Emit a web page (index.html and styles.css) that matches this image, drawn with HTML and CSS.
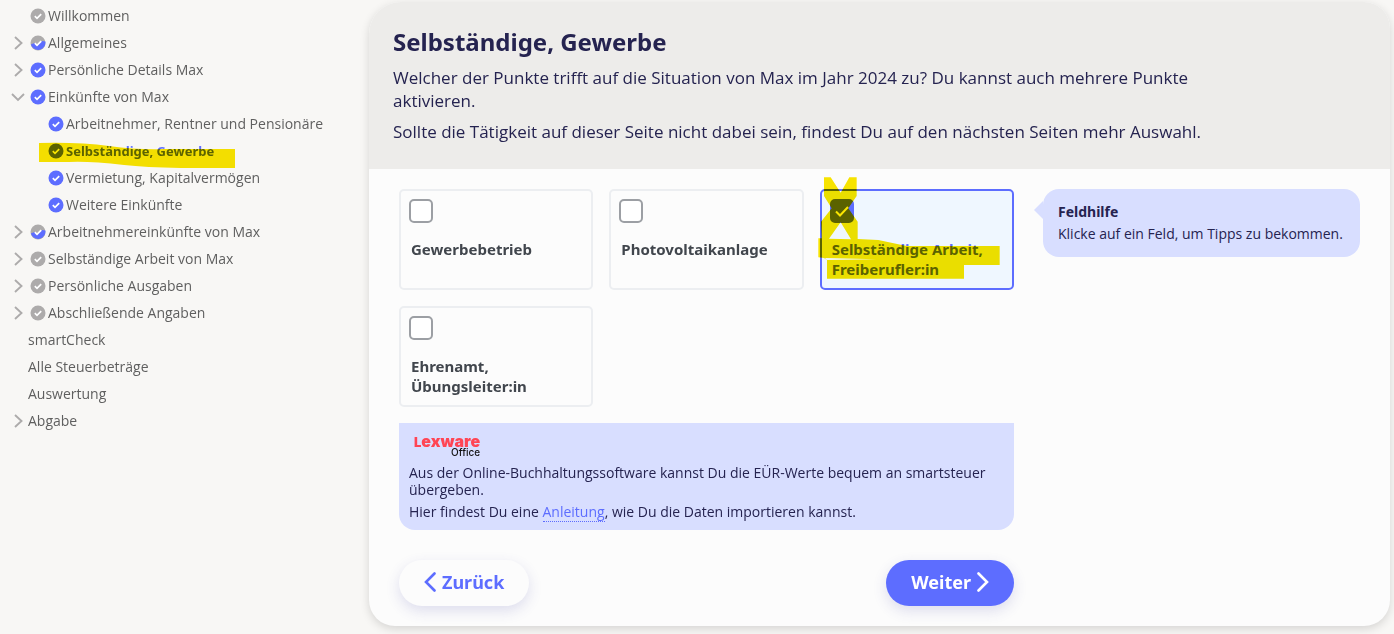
FILE: index.html
```html
<!DOCTYPE html>
<html lang="de">
<head>
<meta charset="utf-8">
<title>Selbständige, Gewerbe</title>
<link rel="stylesheet" href="styles.css">
</head>
<body>
<svg class="defs" width="0" height="0" aria-hidden="true">
  <defs>
    <symbol id="check" viewBox="0 0 16 16">
      <circle cx="8" cy="8" r="7.5" fill="currentColor"/>
      <path d="M4.8 8.2l2.2 2.1 4.2-4.2" fill="none" stroke="#fff" stroke-width="1.7"/>
    </symbol>
    <symbol id="half" viewBox="0 0 16 16">
      <circle cx="8" cy="8" r="7.5" fill="#adabab"/>
      <path d="M.8 9.6L4.4 8 7 10.4 12 6l3.4.4A7.5 7.5 0 0 1 .8 9.600z" fill="#5d6dff"/>
      <path d="M4.8 8.2l2.2 2.1 4.2-4.2" fill="none" stroke="#fff" stroke-width="1.7"/>
    </symbol>
    <symbol id="right" viewBox="0 0 12 14">
      <path d="M3 1l6.500 6L3 13" fill="none" stroke="currentColor" stroke-width="1.9"/>
    </symbol>
    <symbol id="down" viewBox="0 0 14 12">
      <path d="M1 3l6 6 6-6" fill="none" stroke="currentColor" stroke-width="1.9"/>
    </symbol>
  </defs>
</svg>
<div class="page">
  <nav class="sidebar" aria-label="Navigation">
    <ul class="menu">
      <li><a class="item" href="#"><span class="toggle"></span><svg class="state"><use href="#check"/></svg>Willkommen</a></li>
      <li><a class="item" href="#"><span class="toggle"><svg class="arrow"><use href="#right"/></svg></span><svg class="state"><use href="#half"/></svg>Allgemeines</a></li>
      <li><a class="item" href="#"><span class="toggle"><svg class="arrow"><use href="#right"/></svg></span><svg class="state done"><use href="#check"/></svg>Persönliche Details Max</a></li>
      <li><a class="item" href="#"><span class="toggle"><svg class="arrow arrow-down"><use href="#down"/></svg></span><svg class="state done"><use href="#check"/></svg>Einkünfte von Max</a>
        <ul class="menu submenu">
          <li><a class="item" href="#"><span class="toggle"></span><svg class="state done"><use href="#check"/></svg>Arbeitnehmer, Rentner und Pensionäre</a></li>
          <li class="marked"><a class="item current" href="#" aria-current="page"><span class="toggle"></span><svg class="state done"><use href="#check"/></svg>Selbständige, Gewerbe</a>
            <svg class="marker marker-menu" viewBox="0 0 196 26" aria-hidden="true"><path d="M0 1Q40 0 70 4T125 7H196V26Q120 27 85 23T30 20H0z"/></svg></li>
          <li><a class="item" href="#"><span class="toggle"></span><svg class="state done"><use href="#check"/></svg>Vermietung, Kapitalvermögen</a></li>
          <li><a class="item" href="#"><span class="toggle"></span><svg class="state done"><use href="#check"/></svg>Weitere Einkünfte</a></li>
        </ul>
      </li>
      <li><a class="item" href="#"><span class="toggle"><svg class="arrow"><use href="#right"/></svg></span><svg class="state"><use href="#half"/></svg>Arbeitnehmereinkünfte von Max</a></li>
      <li><a class="item" href="#"><span class="toggle"><svg class="arrow"><use href="#right"/></svg></span><svg class="state"><use href="#check"/></svg>Selbständige Arbeit von Max</a></li>
      <li><a class="item" href="#"><span class="toggle"><svg class="arrow"><use href="#right"/></svg></span><svg class="state"><use href="#check"/></svg>Persönliche Ausgaben</a></li>
      <li><a class="item" href="#"><span class="toggle"><svg class="arrow"><use href="#right"/></svg></span><svg class="state"><use href="#check"/></svg>Abschließende Angaben</a></li>
      <li><a class="item" href="#"><span class="toggle"></span>smartCheck</a></li>
      <li><a class="item" href="#"><span class="toggle"></span>Alle Steuerbeträge</a></li>
      <li><a class="item" href="#"><span class="toggle"></span>Auswertung</a></li>
      <li><a class="item" href="#"><span class="toggle"><svg class="arrow"><use href="#right"/></svg></span>Abgabe</a></li>
    </ul>
  </nav>
  <main class="panel">
    <header class="intro">
      <h1>Selbständige, Gewerbe</h1>
      <p>Welcher der Punkte trifft auf die Situation von Max im Jahr 2024 zu? Du kannst auch mehrere Punkte aktivieren.</p>
      <p>Sollte die Tätigkeit auf dieser Seite nicht dabei sein, findest Du auf den nächsten Seiten mehr Auswahl.</p>
    </header>
    <div class="content">
      <form class="form">
        <div class="cards">
          <label class="card"><input class="box" type="checkbox"><span class="caption">Gewerbebetrieb</span></label>
          <label class="card"><input class="box" type="checkbox"><span class="caption">Photovoltaikanlage</span></label>
          <label class="card selected"><span class="boxwrap"><input class="box" type="checkbox" checked><svg class="tick" viewBox="0 0 24 24" aria-hidden="true"><path d="M6 12.5l4 4 8-8.500"/></svg></span><span class="caption">Selbständige Arbeit, Freiberufler:in</span>
            <svg class="marker marker-card" viewBox="0 0 660 390" aria-hidden="true"><path fill-rule="evenodd" d="M42 22H62L92 68 118 22H140V78L115 115 143 155V207L205 210 290 228H569V285H462V326H51V270L42 264 25 262V205H35L33 155 65 115 42 78zM92 157L57 206 123 208zM45 264L200 268 51 270z"/></svg></label>
          <label class="card"><input class="box" type="checkbox"><span class="caption">Ehrenamt, Übungsleiter:in</span></label>
        </div>
        <section class="info">
          <div class="logo"><span class="logo-name"><span class="logo-cap">L</span>exware</span><span class="logo-sub">Office</span></div>
          <p>Aus der Online-Buchhaltungssoftware kannst Du die EÜR-Werte bequem an smartsteuer übergeben.</p>
          <p>Hier findest Du eine <a class="link" href="#">Anleitung</a>, wie Du die Daten importieren kannst.</p>
        </section>
        <div class="actions">
          <button class="btn" type="button"><svg class="btn-arrow" viewBox="0 0 12 20" aria-hidden="true"><path d="M10.500 1.500L2 10l8.500 8.500"/></svg>Zurück</button>
          <button class="btn primary" type="submit">Weiter<svg class="btn-arrow" viewBox="0 0 12 20" aria-hidden="true"><path d="M1.500 1.500L10 10l-8.500 8.500"/></svg></button>
        </div>
      </form>
      <aside class="help">
        <h2>Feldhilfe</h2>
        <p>Klicke auf ein Feld, um Tipps zu bekommen.</p>
      </aside>
    </div>
  </main>
</div>
</body>
</html>
```
FILE: styles.css
```css
* { box-sizing: border-box; }
body {
  margin: 0;
  background: #f8f7f5;
  color: #252350;
  font-family: "Open Sans", "Noto Sans", sans-serif;
  font-size: 14px;
}
h1, h2, p, ul { margin: 0; }
.defs { position: absolute; }
.page { display: flex; align-items: flex-start; }

.sidebar { flex: 0 0 369px; padding: 2px 0 0 12px; }
.menu { list-style: none; padding: 0; }
.submenu { padding-left: 18px; }
.item {
  display: flex;
  align-items: center;
  height: 27px;
  color: #5f5f5f;
  text-decoration: none;
  white-space: nowrap;
}
.toggle { display: flex; justify-content: center; flex: 0 0 16px; min-width: 0; padding-right: 4px; }
.arrow { flex: none; width: 12px; height: 14px; color: #adabab; }
.arrow-down { width: 14px; height: 12px; }
.state { flex: none; width: 16px; height: 16px; margin: 0 2px; color: #adabab; }
.done { color: #5d6dff; }
.current { color: #5d6dff; font-family: "Noto Sans", sans-serif; font-size: 13px; font-weight: 700; }
.marked { position: relative; }
.marker { position: absolute; fill: #fae600; mix-blend-mode: multiply; pointer-events: none; }
.marker-menu { left: 9px; top: 5px; width: 196px; height: 26px; }

.panel {
  flex: 1;
  min-width: 0;
  margin: 2px 4px 8px 0;
  border-radius: 32px 26px 26px 26px;
  background: #fcfcfc;
  box-shadow: 0 3px 10px rgba(0, 0, 0, .14);
}
.intro { padding: 23px 24px 26px; border-radius: 32px 26px 0 0; background: #edecea; }
.intro h1 { font: 700 24px/33px "Noto Sans", sans-serif; }
.intro p { max-width: 840px; margin-top: 8px; font-size: 17px; line-height: 23px; }

.content {
  display: grid;
  grid-template-columns: 615fr 317fr;
  align-items: start;
  gap: 29px;
  padding: 20px 30px;
}
.cards { display: grid; grid-template-columns: repeat(3, 1fr); grid-auto-rows: 1fr; gap: 16px; }
.card {
  position: relative;
  display: flex;
  flex-direction: column;
  gap: 16px;
  padding: 8px 8px 9px;
  border: 2px solid #eceef1;
  border-radius: 5px;
}
.selected { border-color: #5d6dff; background: #eff7ff; }
.box {
  appearance: none;
  display: block;
  width: 24px;
  height: 24px;
  margin: 0;
  border: 2px solid #9c9fa4;
  border-radius: 5px;
  background: #fff;
}
.box:checked { border-color: #5d6dff; background: #5d6dff; }
.boxwrap { position: relative; width: 24px; }
.tick { position: absolute; inset: 0; fill: none; stroke: #fff; stroke-width: 2; }
.caption { padding: 0 2px; color: #41464d; font: 700 15px/20px "Noto Sans", sans-serif; }
.selected .caption { color: #5d6dff; }
.marker-card { left: -12px; top: -21px; width: 220px; height: 130px; }

.info {
  margin-top: 16px;
  padding: 13px 10px 10px;
  border-radius: 0 0 16px 16px;
  background: #d8deff;
  line-height: 17px;
}
.info p + p { margin-top: 5px; }
.logo {
  display: flex;
  flex-direction: column;
  align-items: flex-end;
  width: fit-content;
  height: 28px;
  padding-left: 5px;
  font-family: "Inter", sans-serif;
}
.logo-name { color: #ff4554; font-size: 16px; font-weight: 900; line-height: 11px; }
.logo-cap { font-size: 13px; }
.logo-sub { color: #111; font-size: 10px; font-weight: 500; line-height: 8px; }
.link { color: #5d6dff; text-decoration: none; border-bottom: 1px dotted #5d6dff; }

.actions { display: flex; justify-content: space-between; margin-top: 30px; }
.btn {
  display: flex;
  align-items: center;
  gap: 6px;
  height: 46px;
  padding: 0 25px 2px;
  border: 0;
  border-radius: 23px;
  background: #fcfcfc;
  color: #5d6dff;
  font: 700 18px/24px "Noto Sans", sans-serif;
  box-shadow: 0 5px 14px rgba(60, 60, 160, .16);
}
.primary { background: #5d6dff; color: #fff; }
.btn-arrow { width: 12px; height: 20px; fill: none; stroke: currentColor; stroke-width: 2.6; stroke-linecap: round; }

.help {
  position: relative;
  padding: 12px 10px 12px 15px;
  border-radius: 16px;
  background: #d8deff;
  line-height: 22px;
}
.help::before {
  content: "";
  position: absolute;
  left: -9px;
  top: 12px;
  border: 9px solid transparent;
  border-left: 0;
  border-right-color: #d8deff;
}
.help h2 { font: 700 14px/22px "Noto Sans", sans-serif; }
```
